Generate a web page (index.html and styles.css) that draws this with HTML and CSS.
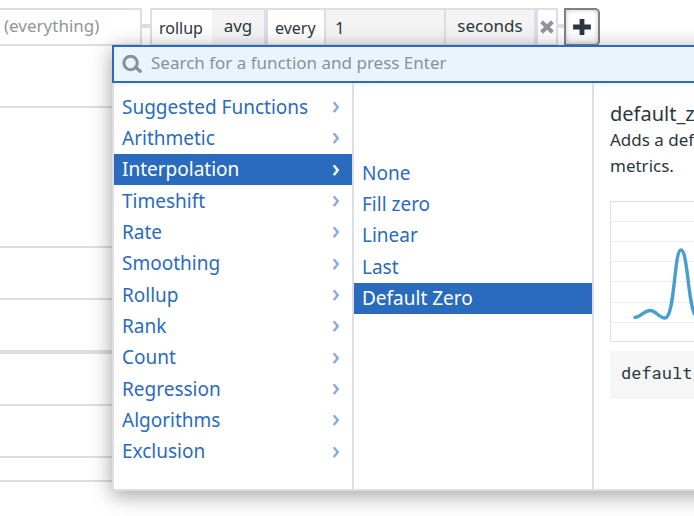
FILE: index.html
```html
<!DOCTYPE html>
<html lang="en">
<head>
<meta charset="utf-8">
<title>Query editor</title>
<link rel="stylesheet" href="styles.css">
</head>
<body>
<main class="editor">
  <section class="row row-query">
    <div class="query">
      <input class="scope" type="text" placeholder="(everything)" aria-label="Scope">
      <span class="link"></span>
      <div class="function">
        <span class="label">rollup</span>
        <button class="cell cell-avg" type="button">avg</button>
        <label class="label label-every" for="interval">every</label>
        <input class="cell interval" id="interval" type="text" value="1">
        <button class="cell cell-unit" type="button">seconds</button>
        <button class="remove" type="button" aria-label="Remove function">
          <svg width="14" height="14" viewBox="0 0 14 14"><path d="M3 3.200L11 10.800M11 3.200L3 10.800" stroke="currentColor" stroke-width="4" stroke-linecap="square"/></svg>
        </button>
      </div>
      <span class="link"></span>
      <div class="adder">
        <button class="add" type="button" aria-label="Add function">
          <svg width="18" height="16" viewBox="0 0 18 16"><path d="M2.500 8H15.500M9 2.500V13.500" stroke="currentColor" stroke-width="4.8" stroke-linecap="square"/></svg>
        </button>
      </div>
    </div>
  </section>
  <section class="row row-tall"></section>
  <section class="row"></section>
  <section class="row row-thick"></section>
  <section class="row"></section>
  <section class="row"></section>
  <section class="row row-short"></section>
</main>

<div class="menu">
  <div class="search">
    <svg class="search-icon" width="20" height="18" viewBox="0 0 20 18"><circle cx="8.6" cy="8" r="6.7" fill="none" stroke="currentColor" stroke-width="3.1"/><path d="M13.5 12.3L18.2 16.3" stroke="currentColor" stroke-width="3.4" stroke-linecap="round"/></svg>
    <input type="text" placeholder="Search for a function and press Enter" aria-label="Search for a function">
  </div>
  <div class="panes">
    <ul class="pane categories">
      <li><a href="#">Suggested Functions<span class="chevron">›</span></a></li>
      <li><a href="#">Arithmetic<span class="chevron">›</span></a></li>
      <li><a class="selected" href="#">Interpolation<span class="chevron">›</span></a></li>
      <li><a href="#">Timeshift<span class="chevron">›</span></a></li>
      <li><a href="#">Rate<span class="chevron">›</span></a></li>
      <li><a href="#">Smoothing<span class="chevron">›</span></a></li>
      <li><a href="#">Rollup<span class="chevron">›</span></a></li>
      <li><a href="#">Rank<span class="chevron">›</span></a></li>
      <li><a href="#">Count<span class="chevron">›</span></a></li>
      <li><a href="#">Regression<span class="chevron">›</span></a></li>
      <li><a href="#">Algorithms<span class="chevron">›</span></a></li>
      <li><a href="#">Exclusion<span class="chevron">›</span></a></li>
    </ul>
    <ul class="pane functions">
      <li><a href="#">None</a></li>
      <li><a href="#">Fill zero</a></li>
      <li><a href="#">Linear</a></li>
      <li><a href="#">Last</a></li>
      <li><a class="selected" href="#">Default Zero</a></li>
    </ul>
    <article class="details">
      <h2>default_zero</h2>
      <p>Adds a default<br>metrics.</p>
      <svg class="chart" width="240" height="141" viewBox="0 0 240 141">
        <path d="M0 20.5H240M0 40.5H240M0 60.5H240M0 80.5H240M0 101.5H240M0 121.5H240" stroke="#ededef"/>
        <rect x="0.5" y="0.5" width="239" height="140" fill="none" stroke="#dedee1"/>
        <path d="M25 116.500C32 115.500 34 109.500 40 109.500S49 117 55 117C65 117 64 49 71 49S78 108 86 115S98 110 106 110S114 117 122 117" fill="none" stroke="#479fce" stroke-width="3.400" stroke-linecap="round"/>
      </svg>
      <pre>default_zero()</pre>
    </article>
  </div>
</div>
</body>
</html>
```

FILE: styles.css
```css
* { box-sizing: border-box; }

body {
  margin: 0;
  min-height: 100vh;
  position: relative;
  overflow: hidden;
  background: #fff;
  color: #2b3740;
  font: 17px/24px "Noto Sans", sans-serif;
}

button, input {
  margin: 0;
  border: 0;
  border-radius: 0;
  padding: 0;
  background: none;
  color: inherit;
  font: inherit;
}

svg { display: block; }

.row {
  height: 52px;
  border-bottom: 2px solid #dedde3;
}
.row-query { height: 108px; padding-top: 8px; }
.row-tall { height: 140px; }
.row-thick { height: 54px; border-bottom-width: 4px; }
.row-short { height: 24px; }

.query {
  display: flex;
  height: 38px;
}
.scope {
  width: 142px;
  padding: 0 4px 2px;
  border: 2px solid #dedde3;
  border-left: 0;
}
.scope::placeholder { color: #919699; opacity: 1; }
.link {
  width: 8px;
  height: 4px;
  margin-top: 16px;
  background: #dedde3;
}
.function {
  display: flex;
  border: 2px solid #dedde3;
}
.label {
  width: 60px;
  padding: 6px 0 0 7px;
  font-size: 16px;
}
.label-every { width: 56px; }
.cell {
  background: #f4f4f4;
  border-right: 2px solid #dedde3;
  padding-bottom: 2px;
}
.cell-avg { width: 56px; border-right-width: 4px; }
.interval {
  width: 122px;
  padding: 2px 9px 0;
  border-left: 2px solid #dedde3;
}
.cell-unit { width: 92px; border-right-width: 4px; }
.remove {
  display: grid;
  place-items: center;
  width: 18px;
  color: #96949a;
}
.adder { margin-left: -2px; }
.add {
  display: grid;
  place-items: center;
  width: 36px;
  height: 38px;
  border: 2px solid #807f86;
  border-radius: 0 5px 5px 0;
  background: #fff;
  box-shadow: inset 0 0 5px #c8c8cc;
}

.menu {
  position: absolute;
  top: 45px;
  left: 112px;
  right: -170px;
  background: #fff;
  box-shadow: 0 4px 20px rgba(0, 0, 0, 0.38);
}
.search {
  display: flex;
  align-items: center;
  gap: 9px;
  height: 38px;
  padding: 0 8px;
  border: 2px solid #2a6bbd;
  background: #ebf4fc;
  color: #84939a;
}
.search input { flex: 1; height: 32px; padding-bottom: 4px; }
.search input::placeholder { color: #84939a; opacity: 1; }

.panes {
  display: flex;
  border: 2px solid #dedde3;
  border-top: 0;
  box-shadow: inset 0 5px 4px -3px #edf3f8;
}
.pane {
  display: grid;
  flex: none;
  width: 240px;
  height: 406px;
  margin: 0;
  border-right: 2px solid #dedde3;
  list-style: none;
  font-size: 19px;
}
.categories { padding: 8px 0 22px; }
.functions { padding: 74px 0 175px; }
.pane a {
  display: flex;
  justify-content: space-between;
  align-items: center;
  height: 100%;
  padding: 0 12px 0 8px;
  color: #2a6bbd;
  text-decoration: none;
}
.pane .selected { background: #2a6bbd; color: #fff; }
.chevron {
  padding-bottom: 5px;
  color: #85a9dc;
  font-size: 25px;
  font-weight: 500;
}
.selected .chevron { color: #fff; }

.details {
  flex: 1;
  min-width: 0;
  padding: 18px 16px;
}
.details h2 {
  margin: 0;
  font-size: 20px;
  font-weight: 400;
  line-height: 26px;
}
.details p { margin: 0; line-height: 26px; }
.chart { margin-top: 22px; }
.details pre {
  margin: 9px 0 0;
  padding: 8px 11px 12px;
  background: #f6f6f6;
  font: 17px/28px "Roboto Mono", "DejaVu Sans Mono", monospace;
}
```
